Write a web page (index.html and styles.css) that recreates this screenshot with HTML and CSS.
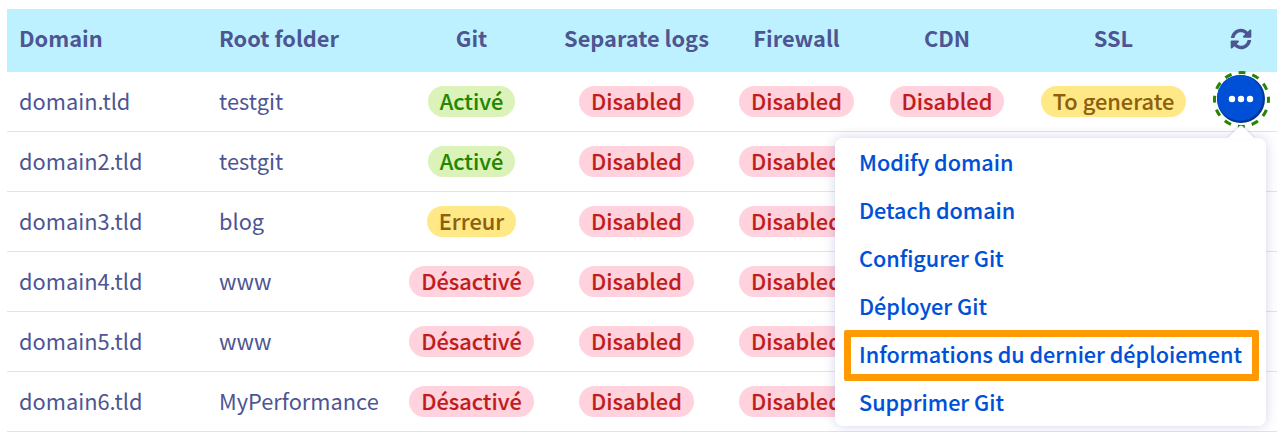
FILE: index.html
```
<!DOCTYPE html>
<html lang="en">
<head>
<meta charset="utf-8">
<title>Multisite</title>
<link rel="stylesheet" href="styles.css">
</head>
<body>
<table class="sites">
<colgroup><col class="c-domain"><col class="c-root"><col class="c-git"><col class="c-logs"><col class="c-firewall"><col class="c-cdn"><col class="c-ssl"><col class="c-actions"></colgroup>
<thead>
<tr><th class="left">Domain</th><th class="left">Root folder</th><th>Git</th><th>Separate logs</th><th>Firewall</th><th>CDN</th><th>SSL</th>
<th><svg class="refresh" viewBox="0 0 512 512"><path d="M20 235C32 115 132 18 252 18c62 0 118 26 160 67l46-44c14-14 38-4 38 16v147c0 11-9 20-20 20H325c-20 0-30-24-16-38l46-44c-28-27-64-42-103-42-71 0-130 46-146 122-2 8-6 13-12 13zM492 277c-12 120-112 217-232 217-62 0-118-26-160-67l-46 44c-14 14-38 4-38-16V308c0-11 9-20 20-20h151c20 0 30 24 16 38l-46 44c28 27 64 42 103 42 71 0 130-46 146-122 2-8 6-13 12-13z"/></svg></th></tr>
</thead>
<tbody>
<tr><td class="left">domain.tld</td><td class="left">testgit</td><td><span class="badge ok">Activé</span></td><td><span class="badge off">Disabled</span></td><td><span class="badge off">Disabled</span></td><td><span class="badge off">Disabled</span></td><td><span class="badge warn">To generate</span></td>
<td class="actions"><div class="anchor"><svg class="more" viewBox="0 0 60 60"><circle class="disc-shade" cx="30" cy="29" r="24"/><circle class="disc" cx="28.9" cy="27.9" r="22.9"/><circle class="ring" cx="30.5" cy="29.5" r="27"/><g class="dots"><circle cx="21" cy="29" r="3.2"/><circle cx="30" cy="29" r="3.2"/><circle cx="39" cy="29" r="3.2"/></g></svg>
<div class="menu"><svg class="arrow" viewBox="0 0 28 14"><path d="M0 14L12.5 1.2q1.5-1.2 3 0L28 14z"/></svg><a class="item">Modify domain</a><a class="item">Detach domain</a><a class="item">Configurer Git</a><a class="item">Déployer Git</a><a class="item marked">Informations du dernier déploiement</a><a class="item">Supprimer Git</a></div></div></td></tr>
<tr><td class="left">domain2.tld</td><td class="left">testgit</td><td><span class="badge ok">Activé</span></td><td><span class="badge off">Disabled</span></td><td><span class="badge off">Disabled</span></td><td></td><td></td><td></td></tr>
<tr><td class="left">domain3.tld</td><td class="left">blog</td><td><span class="badge warn">Erreur</span></td><td><span class="badge off">Disabled</span></td><td><span class="badge off">Disabled</span></td><td></td><td></td><td></td></tr>
<tr><td class="left">domain4.tld</td><td class="left">www</td><td><span class="badge off">Désactivé</span></td><td><span class="badge off">Disabled</span></td><td><span class="badge off">Disabled</span></td><td></td><td></td><td></td></tr>
<tr><td class="left">domain5.tld</td><td class="left">www</td><td><span class="badge off">Désactivé</span></td><td><span class="badge off">Disabled</span></td><td><span class="badge off">Disabled</span></td><td></td><td></td><td></td></tr>
<tr><td class="left">domain6.tld</td><td class="left">MyPerformance</td><td><span class="badge off">Désactivé</span></td><td><span class="badge off">Disabled</span></td><td><span class="badge off">Disabled</span></td><td></td><td></td><td></td></tr>
</tbody>
</table>
</body>
</html>
```
FILE: styles.css
```
* { box-sizing: border-box; }
body {
  margin: 0;
  padding: 9px 7px 0;
  height: 432px;
  overflow: hidden;
  background: #fff;
  color: #4d5592;
  font: 400 21.8px/31px "Noto Sans CJK SC", "Noto Sans", sans-serif;
}
.sites { width: 1270px; table-layout: fixed; border-collapse: separate; border-spacing: 0; }
.c-domain { width: 200px; }
.c-root { width: 184px; }
.c-git { width: 161px; }
.c-logs { width: 169px; }
.c-firewall { width: 151px; }
.c-cdn { width: 150px; }
.c-ssl { width: 183px; }
.c-actions { width: 72px; }
th, td { padding: 0; text-align: center; vertical-align: middle; white-space: nowrap; }
th { height: 63px; background: #bef1ff; font-weight: 700; padding-bottom: 7px; }
td { height: 60px; border-bottom: 1px solid #bef1ff; }
.left { text-align: left; padding-left: 12px; }
td.left { padding-bottom: 2px; }
.refresh { display: block; width: 22px; height: 22px; margin: 4px auto 0; fill: #4d5592; }
.badge {
  display: block;
  width: max-content;
  margin: 0 auto;
  height: 31px;
  padding: 0 12px;
  border-radius: 16px;
  font-weight: 500;
  line-height: 29px;
  -webkit-text-stroke: 0.12px currentColor;
}
.ok { background: #dbf2b8; color: #228600; }
.off { background: #ffd2dd; color: #c11b1b; }
.warn { background: #ffe987; color: #8d5f0f; }
.anchor { position: relative; width: 60px; height: 60px; margin: -4px auto 0; }
.more { display: block; width: 60px; height: 60px; }
.disc-shade { fill: #003793; }
.disc { fill: #0050d7; }
.ring { fill: none; stroke: #268403; stroke-width: 3; stroke-dasharray: 7.07 7.07; stroke-dashoffset: 3.53; }
.dots { fill: #fff; }
.menu {
  position: absolute;
  z-index: 1;
  top: 68px;
  right: 5px;
  width: 431px;
  height: 288px;
  border-radius: 8px;
  background: #fff;
  box-shadow: 0 0 12px rgba(77, 85, 180, 0.25);
  color: #0050d7;
  font-size: 21.6px;
  font-weight: 500;
  text-align: left;
  -webkit-text-stroke: 0.12px currentColor;
}
.arrow { position: absolute; top: -13px; right: 11px; width: 28px; height: 14px; fill: #fff; filter: drop-shadow(0 -1px 1px rgba(77, 85, 180, 0.2)); }
.item { display: block; height: 48px; line-height: 48px; padding-left: 24px; }
.marked { width: 415px; height: 51px; line-height: 34px; margin: 0 0 -3px 9px; padding-left: 8px; border: 7px solid #ff9a05; border-radius: 2px; }
```
